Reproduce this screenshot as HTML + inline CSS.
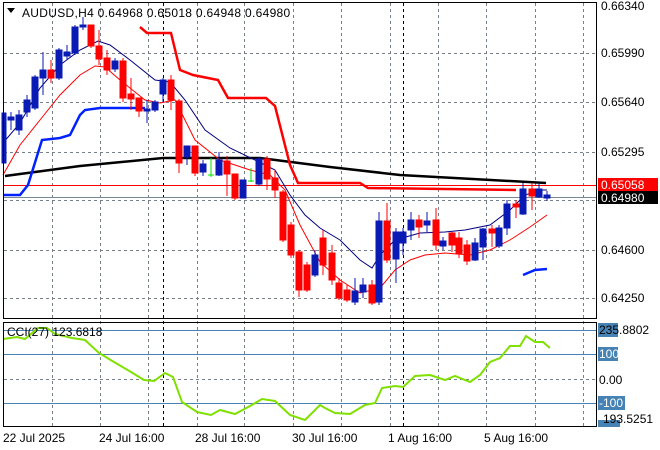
<!DOCTYPE html><html><head><meta charset="utf-8"><style>
body{margin:0;background:#fff;width:660px;height:450px;overflow:hidden}
svg{display:block;font-family:"Liberation Sans",sans-serif;font-size:12px}
</style></head><body>
<svg width="660" height="450" viewBox="0 0 660 450">
<rect width="660" height="450" fill="#fff"/>
<g stroke="#778088" stroke-dasharray="3,3" stroke-width="1">
<line x1="4" y1="53.5" x2="597" y2="53.5"/><line x1="4" y1="102.5" x2="597" y2="102.5"/><line x1="4" y1="152.5" x2="597" y2="152.5"/><line x1="4" y1="200.5" x2="597" y2="200.5"/><line x1="4" y1="250.5" x2="597" y2="250.5"/><line x1="4" y1="298.5" x2="597" y2="298.5"/>
<line x1="52.5" y1="3" x2="52.5" y2="426"/><line x1="100.5" y1="3" x2="100.5" y2="426"/><line x1="148.5" y1="3" x2="148.5" y2="426"/><line x1="197.5" y1="3" x2="197.5" y2="426"/><line x1="244.5" y1="3" x2="244.5" y2="426"/><line x1="293.5" y1="3" x2="293.5" y2="426"/><line x1="341.5" y1="3" x2="341.5" y2="426"/><line x1="390.5" y1="3" x2="390.5" y2="426"/><line x1="438.5" y1="3" x2="438.5" y2="426"/><line x1="486.5" y1="3" x2="486.5" y2="426"/><line x1="535.5" y1="3" x2="535.5" y2="426"/><line x1="583.5" y1="3" x2="583.5" y2="426"/>
<line x1="4" y1="379.5" x2="597" y2="379.5"/>
</g>
<g stroke="#000" stroke-dasharray="3,3"><line x1="163.5" y1="3" x2="163.5" y2="426"/><line x1="403.5" y1="3" x2="403.5" y2="426"/></g>
<line x1="4" y1="185.5" x2="597" y2="185.5" stroke="#f00"/>
<line x1="4" y1="197.5" x2="597" y2="197.5" stroke="#778899"/>
<polyline fill="none" stroke="#000" stroke-width="2.5" points="5,176 80,166 163,158 260,158 330,167 400,175 546,183"/>
<polyline fill="none" stroke="#f00" stroke-width="2.5" points="140,27 147,33 171,33 180,70 193,75 218,80 228,98 266,98 275,106 290,165 298,183 360,183 368,188 516,190"/>
<polyline fill="none" stroke="#0022ff" stroke-width="2.5" points="3,195 20,195 28,185 42,140 60,138 70,135 80,115 85,110 100,108 145,108"/>
<polyline fill="none" stroke="#0022ff" stroke-width="2.5" points="523,275 535,270 547,269"/>
<polyline fill="none" stroke="#000080" stroke-width="1" points="3,143 20,123 40,88 60,65 80,50 98,41 110,45 130,60 155,80 170,82 185,100 205,130 230,148 255,160 275,170 290,195 305,215 320,228 340,240 360,260 372,268 380,255 395,240 420,233 445,232 465,230 490,225 510,210 525,195 540,190 547,190"/>
<polyline fill="none" stroke="#f00" stroke-width="1" points="3,175 20,145 40,120 60,95 80,75 95,66 105,67 120,80 145,100 160,103 175,100 195,140 220,160 250,170 270,175 285,190 300,225 320,262 340,280 360,293 380,288 395,270 410,260 425,255 445,253 470,255 490,250 510,240 530,227 547,215"/>
<g stroke-width="1">
<g fill="#0a1ab4" stroke="#0a1ab4">
<line x1="4" y1="113" x2="4" y2="163"/><rect x="2" y="113" width="4" height="50"/>
<line x1="11" y1="112" x2="11" y2="130"/><rect x="8" y="117" width="6" height="3"/>
<line x1="19" y1="110" x2="19" y2="135"/><rect x="16" y="115" width="6" height="15"/>
<line x1="27" y1="95" x2="27" y2="117"/><rect x="24" y="100" width="6" height="12"/>
<line x1="35" y1="75" x2="35" y2="110"/><rect x="32" y="77" width="6" height="31"/>
<line x1="43" y1="52" x2="43" y2="95"/><rect x="40" y="70" width="6" height="8"/>
<line x1="59" y1="48" x2="59" y2="80"/><rect x="56" y="50" width="6" height="28"/>
<line x1="67" y1="45" x2="67" y2="60"/><rect x="64" y="52" width="6" height="4"/>
<line x1="75" y1="25" x2="75" y2="55"/><rect x="72" y="27" width="6" height="26"/>
<line x1="83" y1="17" x2="83" y2="30"/><rect x="80" y="25" width="6" height="2"/>
<line x1="115" y1="58" x2="115" y2="72"/><rect x="112" y="61" width="6" height="8"/>
<line x1="147" y1="100" x2="147" y2="123"/><rect x="144" y="109" width="6" height="2"/>
<line x1="155" y1="100" x2="155" y2="112"/><rect x="152" y="102" width="6" height="8"/>
<line x1="163" y1="78" x2="163" y2="102"/><rect x="160" y="80" width="6" height="14"/>
<line x1="187" y1="146" x2="187" y2="165"/><rect x="184" y="146" width="6" height="11"/>
<line x1="203" y1="160" x2="203" y2="176"/><rect x="200" y="164" width="6" height="8"/>
<line x1="219" y1="152" x2="219" y2="176"/><rect x="216" y="160" width="6" height="15"/>
<line x1="243" y1="180" x2="243" y2="198"/><rect x="240" y="180" width="6" height="18"/>
<line x1="259" y1="157" x2="259" y2="186"/><rect x="256" y="159" width="6" height="25"/>
<line x1="315" y1="250" x2="315" y2="277"/><rect x="312" y="255" width="6" height="20"/>
<line x1="355" y1="278" x2="355" y2="305"/><rect x="352" y="291" width="6" height="11"/>
<line x1="363" y1="278" x2="363" y2="298"/><rect x="360" y="285" width="6" height="7"/>
<line x1="379" y1="212" x2="379" y2="305"/><rect x="376" y="221" width="6" height="81"/>
<line x1="396" y1="228" x2="396" y2="283"/><rect x="393" y="232" width="6" height="27"/>
<line x1="403" y1="228" x2="403" y2="255"/><rect x="400" y="232" width="6" height="11"/>
<line x1="411" y1="212" x2="411" y2="240"/><rect x="408" y="220" width="6" height="10"/>
<line x1="427" y1="212" x2="427" y2="232"/><rect x="424" y="221" width="6" height="4"/>
<line x1="443" y1="237" x2="443" y2="250"/><rect x="440" y="241" width="6" height="5"/>
<line x1="475" y1="238" x2="475" y2="261"/><rect x="472" y="243" width="6" height="17"/>
<line x1="483" y1="228" x2="483" y2="260"/><rect x="480" y="229" width="6" height="18"/>
<line x1="499" y1="225" x2="499" y2="248"/><rect x="496" y="228" width="6" height="18"/>
<line x1="507" y1="200" x2="507" y2="235"/><rect x="504" y="204" width="6" height="24"/>
<line x1="523" y1="183" x2="523" y2="215"/><rect x="520" y="189" width="6" height="25"/>
<line x1="539" y1="183" x2="539" y2="198"/><rect x="536" y="189" width="6" height="8"/>
<line x1="547" y1="191" x2="547" y2="201"/><rect x="544" y="195" width="6" height="3"/>
</g>
<g fill="#f00" stroke="#f00">
<line x1="51" y1="60" x2="51" y2="83"/><rect x="48" y="70" width="6" height="8"/>
<line x1="91" y1="25" x2="91" y2="48"/><rect x="88" y="25" width="6" height="21"/>
<line x1="99" y1="30" x2="99" y2="65"/><rect x="96" y="46" width="6" height="13"/>
<line x1="107" y1="50" x2="107" y2="75"/><rect x="104" y="58" width="6" height="12"/>
<line x1="123" y1="58" x2="123" y2="102"/><rect x="120" y="61" width="6" height="37"/>
<line x1="131" y1="78" x2="131" y2="110"/><rect x="128" y="94" width="6" height="5"/>
<line x1="139" y1="98" x2="139" y2="117"/><rect x="136" y="98" width="6" height="13"/>
<line x1="171" y1="75" x2="171" y2="110"/><rect x="168" y="80" width="6" height="20"/>
<line x1="179" y1="99" x2="179" y2="173"/><rect x="176" y="101" width="6" height="62"/>
<line x1="195" y1="146" x2="195" y2="176"/><rect x="192" y="146" width="6" height="27"/>
<line x1="227" y1="156" x2="227" y2="196"/><rect x="224" y="161" width="6" height="13"/>
<line x1="235" y1="174" x2="235" y2="200"/><rect x="232" y="174" width="6" height="24"/>
<line x1="267" y1="156" x2="267" y2="190"/><rect x="264" y="159" width="6" height="20"/>
<line x1="275" y1="170" x2="275" y2="198"/><rect x="272" y="178" width="6" height="12"/>
<line x1="283" y1="190" x2="283" y2="242"/><rect x="280" y="192" width="6" height="48"/>
<line x1="291" y1="222" x2="291" y2="258"/><rect x="288" y="225" width="6" height="30"/>
<line x1="299" y1="250" x2="299" y2="297"/><rect x="296" y="252" width="6" height="38"/>
<line x1="307" y1="262" x2="307" y2="292"/><rect x="304" y="265" width="6" height="25"/>
<line x1="323" y1="230" x2="323" y2="275"/><rect x="320" y="238" width="6" height="27"/>
<line x1="332" y1="245" x2="332" y2="285"/><rect x="329" y="253" width="6" height="27"/>
<line x1="339" y1="278" x2="339" y2="300"/><rect x="336" y="283" width="6" height="15"/>
<line x1="347" y1="285" x2="347" y2="302"/><rect x="344" y="290" width="6" height="10"/>
<line x1="372" y1="280" x2="372" y2="305"/><rect x="369" y="285" width="6" height="18"/>
<line x1="387" y1="203" x2="387" y2="263"/><rect x="384" y="221" width="6" height="39"/>
<line x1="419" y1="215" x2="419" y2="238"/><rect x="416" y="220" width="6" height="7"/>
<line x1="436" y1="208" x2="436" y2="250"/><rect x="433" y="220" width="6" height="25"/>
<line x1="452" y1="232" x2="452" y2="252"/><rect x="449" y="233" width="6" height="12"/>
<line x1="459" y1="232" x2="459" y2="258"/><rect x="456" y="238" width="6" height="16"/>
<line x1="467" y1="240" x2="467" y2="265"/><rect x="464" y="245" width="6" height="16"/>
<line x1="492" y1="225" x2="492" y2="247"/><rect x="489" y="229" width="6" height="4"/>
<line x1="516" y1="200" x2="516" y2="218"/><rect x="513" y="204" width="6" height="3"/>
<line x1="532" y1="183" x2="532" y2="210"/><rect x="529" y="189" width="6" height="7"/>
</g>
<g stroke="#00e000"><line x1="211" y1="158" x2="211" y2="177"/><line x1="208" y1="175" x2="214" y2="175"/><line x1="251" y1="168" x2="251" y2="182"/><line x1="248" y1="181" x2="254" y2="181"/></g>
</g>
<g stroke="#4682b4"><line x1="4" y1="330.5" x2="597" y2="330.5"/><line x1="4" y1="354.5" x2="597" y2="354.5"/><line x1="4" y1="403.5" x2="597" y2="403.5"/></g>
<polyline fill="none" stroke="#80e000" stroke-width="2" points="3,339 17,337 25,339 38,328 47,328 55,334 72,338 85,340 99,353 114,362 131,372 144,380 154,381 165,373 173,377 182,402 197,412 211,415 220,410 235,414 250,406 262,399 275,401 290,415 305,420 320,405 325,408 335,413 350,414 365,405 375,403 382,388 395,386 403,387 415,376 430,375 445,380 455,376 470,382 480,375 490,362 500,358 510,346 520,346 526,336 535,342 543,342 550,348"/>
<rect x="3.5" y="2.5" width="593" height="316" fill="none" stroke="#000"/>
<rect x="3.5" y="322.5" width="593" height="104" fill="none" stroke="#000"/>
<polygon points="7,8 15,8 11,13" fill="#000"/>
<text x="22" y="17" letter-spacing="0.3">AUDUSD,H4  0.64968 0.65018 0.64948 0.64980</text>
<text x="7" y="336">CCI(27) 123.6818</text>
<g fill="#000">
<text x="601" y="10">0.66340</text><text x="601" y="57">0.65990</text><text x="601" y="106">0.65640</text><text x="601" y="156">0.65295</text><text x="601" y="204">0.64945</text><text x="601" y="254">0.64600</text><text x="601" y="302">0.64250</text>
</g>
<rect x="598" y="178" width="60" height="13" fill="#f00"/><text x="601" y="189" fill="#fff">0.65058</text>
<rect x="598" y="191" width="60" height="13" fill="#000"/><text x="601" y="202" fill="#fff">0.64980</text>
<rect x="598" y="323" width="20" height="14" fill="#4682b4"/><text x="599" y="334" fill="#000">235.8802</text>
<rect x="598" y="347" width="20" height="14" fill="#4682b4"/><text x="599" y="358" fill="#fff">100</text>
<text x="599" y="384">0.00</text>
<rect x="598" y="396" width="27" height="14" fill="#4682b4"/><text x="599" y="407" fill="#fff">-100</text>
<rect x="598" y="420" width="22" height="7" fill="#4682b4"/><text x="603" y="423">193.5251</text>
<g fill="#000"><text x="3" y="442">22 Jul 2025</text><text x="99" y="442">24 Jul 16:00</text><text x="195" y="442">28 Jul 16:00</text><text x="292" y="442">30 Jul 16:00</text><text x="388" y="442">1 Aug 16:00</text><text x="484" y="442">5 Aug 16:00</text></g>
</svg>
</body></html>
